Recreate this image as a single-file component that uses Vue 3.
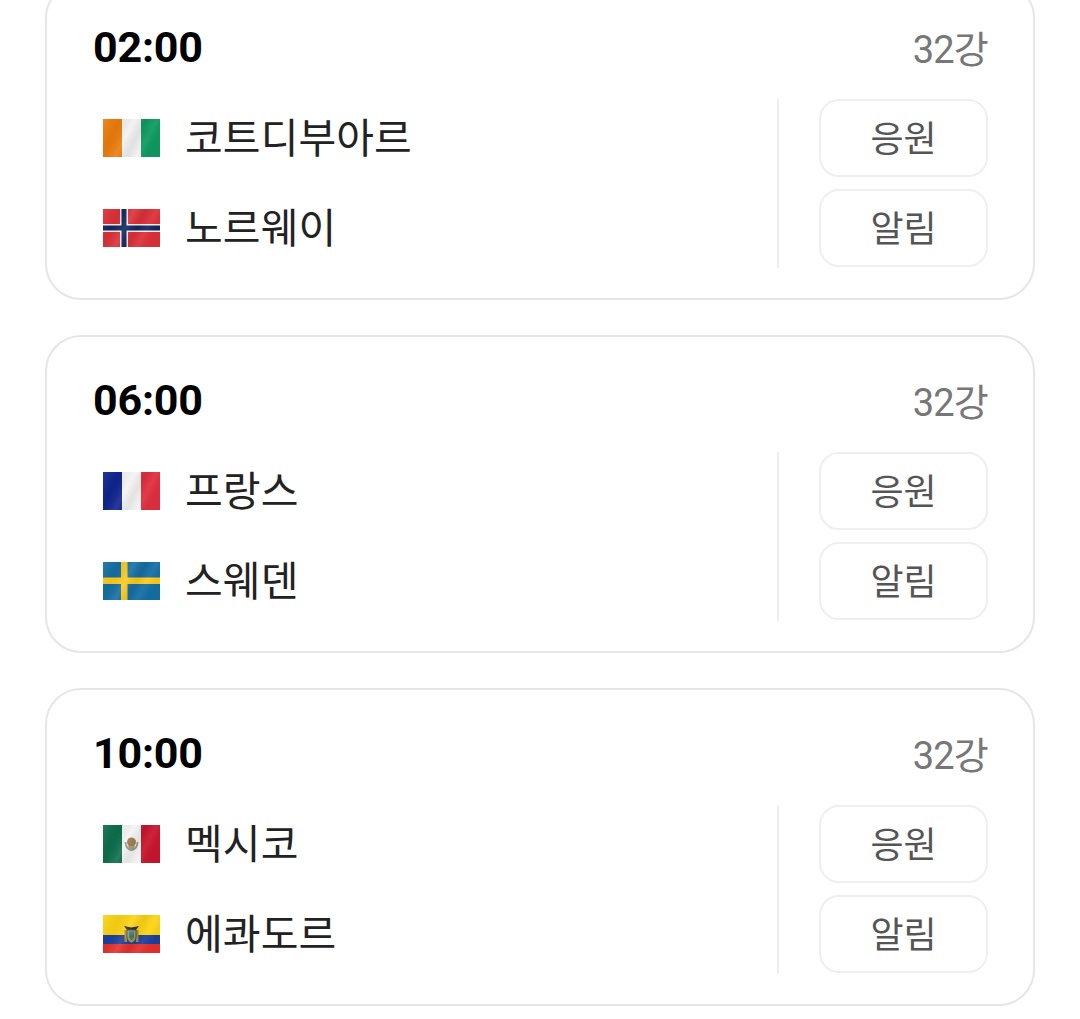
<script setup>
const matches = [
  { time: '02:00', round: '32강', teams: [{ name: '코트디부아르', flag: 'civ' }, { name: '노르웨이', flag: 'nor' }] },
  { time: '06:00', round: '32강', teams: [{ name: '프랑스', flag: 'fra' }, { name: '스웨덴', flag: 'swe' }] },
  { time: '10:00', round: '32강', teams: [{ name: '멕시코', flag: 'mex' }, { name: '에콰도르', flag: 'ecu' }] },
]
</script>

<template>
  <main class="list">
    <section v-for="m in matches" :key="m.time" class="card">
      <header class="head">
        <strong class="time">{{ m.time }}</strong>
        <span class="round">{{ m.round }}</span>
      </header>
      <div class="body">
        <div class="teams">
          <div v-for="t in m.teams" :key="t.name" class="team">
            <svg class="flag" viewBox="0 0 57 38" aria-hidden="true">
              <defs>
                <linearGradient :id="'sheen-' + t.flag" x1="0" y1="0" x2="1" y2="0.35">
                  <stop offset="0" stop-color="#fff" stop-opacity="0.08" />
                  <stop offset="0.28" stop-color="#000" stop-opacity="0.05" />
                  <stop offset="0.5" stop-color="#fff" stop-opacity="0.1" />
                  <stop offset="0.68" stop-color="#000" stop-opacity="0.07" />
                  <stop offset="0.85" stop-color="#fff" stop-opacity="0.06" />
                  <stop offset="1" stop-color="#000" stop-opacity="0.04" />
                </linearGradient>
              </defs>
              <g v-if="t.flag === 'civ'">
                <rect width="19" height="38" fill="#ec7d0c" />
                <rect x="19" width="19" height="38" fill="#f2f2f2" />
                <rect x="38" width="19" height="38" fill="#0f9a60" />
              </g>
              <g v-else-if="t.flag === 'nor'">
                <rect width="57" height="38" fill="#dd3038" />
                <rect x="17" width="8" height="38" fill="#f2f2f2" />
                <rect y="15" width="57" height="8" fill="#f2f2f2" />
                <rect x="18.500" width="5" height="38" fill="#14275f" />
                <rect y="16.500" width="57" height="5" fill="#14275f" />
              </g>
              <g v-else-if="t.flag === 'fra'">
                <rect width="19" height="38" fill="#10248f" />
                <rect x="19" width="19" height="38" fill="#f4f4f4" />
                <rect x="38" width="19" height="38" fill="#e02f3e" />
              </g>
              <g v-else-if="t.flag === 'swe'">
                <rect width="57" height="38" fill="#146fa4" />
                <rect x="18" width="6.500" height="38" fill="#fbcb1e" />
                <rect y="15.500" width="57" height="6.500" fill="#fbcb1e" />
              </g>
              <g v-else-if="t.flag === 'mex'">
                <rect width="19" height="38" fill="#0c6f4c" />
                <rect x="19" width="19" height="38" fill="#f4f4f4" />
                <rect x="38" width="19" height="38" fill="#c8162e" />
                <path d="M22.500 17c0 5 3 8 6 8s6-3 6-8" fill="none" stroke="#7fa58a" stroke-width="1.800" />
                <ellipse cx="28.500" cy="17" rx="4.500" ry="4.500" fill="#a07c50" />
                <path d="M25 21h7l-1 3h-5z" fill="#b89a70" />
              </g>
              <g v-else>
                <rect width="57" height="20" fill="#fcd414" />
                <rect y="20" width="57" height="9" fill="#1c3f9c" />
                <rect y="29" width="57" height="9" fill="#e5302f" />
                <path d="M21 11l7.500 1.500L36 11l-3 4h-9z" fill="#2c2a20" />
                <path d="M21.500 15h2.500v12h-2.500zM33 15h2.500v12H33z" fill="#a8892c" />
                <path d="M24 15h9v7c0 3-2 5-4.500 6-2.500-1-4.500-3-4.500-6z" fill="#8d9a8c" stroke="#5a4c24" stroke-width="0.800" />
                <rect x="26" y="16.500" width="5" height="3.500" fill="#3f7f9f" />
                <path d="M26 20h5v2l-2.500 3.500L26 22z" fill="#4d7a3a" />
              </g>
              <rect width="57" height="38" :fill="'url(#sheen-' + t.flag + ')'" />
            </svg>
            <span class="name">{{ t.name }}</span>
          </div>
        </div>
        <div class="actions">
          <button class="btn" type="button"><span class="label">응원</span></button>
          <button class="btn" type="button"><span class="label">알림</span></button>
        </div>
      </div>
    </section>
  </main>
</template>

<style>
html, body { margin: 0; background: #fff; }
</style>

<style scoped>
.list {
  width: 1080px;
  height: 1019px;
  overflow: hidden;
  box-sizing: border-box;
  padding: 0 45px;
  display: flex;
  flex-direction: column;
  gap: 35px;
  font-family: Roboto, "Noto Sans CJK KR", sans-serif;
}
.list > .card:first-child { margin-top: -18.500px; }
.card {
  flex: none;
  box-sizing: border-box;
  height: 318px;
  border: 2px solid #e6e6e6;
  border-radius: 36px;
  padding: 38px 45px 30px 46px;
  background: #fff;
}
.head {
  height: 50px;
  margin-bottom: 27px;
  display: flex;
  align-items: center;
  justify-content: space-between;
}
.time {
  font-size: 43px;
  font-weight: 700;
  color: #000;
  letter-spacing: -0.2px;
}
.round {
  font-size: 38px;
  font-weight: 400;
  color: #777;
  letter-spacing: -0.8px;
}
.body {
  display: flex;
  height: 169px;
}
.teams {
  flex: 1;
  display: flex;
  flex-direction: column;
  gap: 12px;
  padding-left: 10px;
  border-right: 2px solid #eeeeee;
}
.team {
  height: 78px;
  display: flex;
  align-items: center;
  gap: 25px;
}
.flag { width: 57px; height: 38px; flex: none; filter: blur(0.35px); }
.name {
  font-family: "Noto Sans CJK KR", sans-serif;
  font-size: 41px;
  color: #222;
  letter-spacing: 0.1px;
  position: relative;
  top: -3px;
}
.actions {
  width: 169px;
  margin-left: 40px;
  display: flex;
  flex-direction: column;
  gap: 11.500px;
}
.btn {
  height: 78.500px;
  box-sizing: border-box;
  border: 2px solid #efefef;
  border-radius: 20px;
  background: #fff;
  padding: 0;
  font-family: "Noto Sans CJK KR", sans-serif;
  font-size: 36px;
  color: #555;
}
.label { position: relative; top: -2px; }
</style>
